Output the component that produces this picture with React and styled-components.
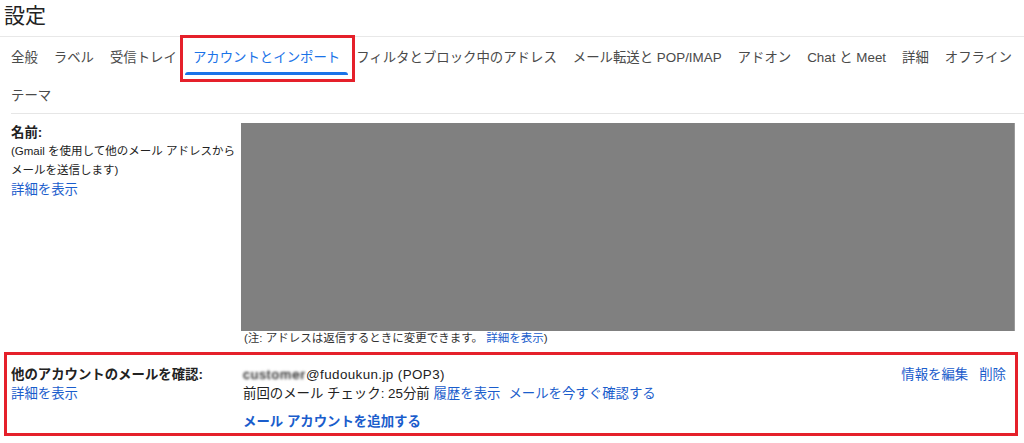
import React from 'react';
import styled, { createGlobalStyle } from 'styled-components';

const GlobalStyle = createGlobalStyle`
  body {
    margin: 0;
    background: #fff;
    font-family: "Liberation Sans", Arial, "Noto Sans CJK JP", sans-serif;
    color: #222;
  }
`;

const Page = styled.div`
  width: 1024px;
  height: 443px;
  overflow: hidden;
`;

const Title = styled.h1`
  margin: 0;
  height: 37px;
  box-sizing: border-box;
  padding: 4px 0 0 4px;
  font-size: 21px;
  line-height: 23px;
  font-weight: normal;
  color: #222;
  border-bottom: 1px solid #e8e8e8;
`;

const TabBar = styled.nav`
  display: flex;
  flex-wrap: wrap;
  padding-left: 3px;
`;

const Tab = styled.div`
  position: relative;
  height: 38px;
  padding: 0 8px;
  display: flex;
  align-items: center;
  font-size: 13.4px;
  white-space: nowrap;
  color: ${(p) => (p.$active ? '#1a73e8' : '#4a4a4a')};
  cursor: pointer;
  &::after {
    content: '';
    display: ${(p) => (p.$active ? 'block' : 'none')};
    position: absolute;
    left: 0;
    right: 0;
    bottom: 0;
    height: 3px;
    border-radius: 3px 3px 0 0;
    background: #1a73e8;
  }
`;

const Highlight = styled.div`
  position: absolute;
  border: 3px solid #e5202a;
  pointer-events: none;
  z-index: 2;
`;

const TabHighlight = styled(Highlight)`
  left: -5px;
  right: -7px;
  top: -2px;
  bottom: -7px;
`;

const Content = styled.div`
  margin-left: 11px;
  border-top: 1px solid #e6e6e6;
`;

const SettingRow = styled.div`
  position: relative;
  display: grid;
  grid-template-columns: 230px 1fr;
  padding: ${(p) => p.$pad};
  padding-right: 9px;
  font-size: 13.4px;
  line-height: 19px;
`;

const LabelCol = styled.div`
  display: flex;
  flex-direction: column;
  align-items: flex-start;
`;

const Label = styled.div`
  font-weight: bold;
  color: #222;
  white-space: nowrap;
`;

const Hint = styled.div`
  font-size: 11.5px;
  color: #222;
  white-space: nowrap;
`;

const Link = styled.a`
  color: #1a5dcc;
  text-decoration: none;
  cursor: pointer;
  font-weight: ${(p) => (p.$bold ? 'bold' : 'normal')};
  margin-left: ${(p) => p.$gap || 0}px;
`;

const Redacted = styled.div`
  height: 208px;
  background: #808080;
  border-right: 1px solid #9a9a9a;
`;

const Note = styled.div`
  font-size: 11.5px;
  line-height: 14px;
  padding-left: 3px;
  color: #333;
`;

const ValueCol = styled.div`
  display: flex;
  flex-direction: column;
`;

const AccountLine = styled.div`
  display: flex;
  justify-content: space-between;
  padding-left: 2px;
`;

const Address = styled.span`
  letter-spacing: 0.4px;
`;

const Blurred = styled.span`
  display: inline-block;
  color: #3a3a3a;
  letter-spacing: 1px;
  text-shadow: 0 0 2px #444;
  filter: blur(1px);
`;

const Actions = styled.div`
  display: flex;
  gap: 11px;
  margin-right: 9px;
`;

const TextLine = styled.div`
  padding-left: 2px;
  margin-top: ${(p) => p.$top || 0}px;
`;

const AccountHighlight = styled(Highlight)`
  left: -7px;
  right: 6px;
  top: 0;
  bottom: 0;
`;

const tabs = [
  '全般',
  'ラベル',
  '受信トレイ',
  'アカウントとインポート',
  'フィルタとブロック中のアドレス',
  'メール転送と POP/IMAP',
  'アドオン',
  'Chat と Meet',
  '詳細',
  'オフライン',
  'テーマ',
];

export default function App() {
  const active = 'アカウントとインポート';
  return (
    <Page>
      <GlobalStyle />
      <Title>設定</Title>
      <TabBar>
        {tabs.map((t) => (
          <Tab key={t} $active={t === active}>
            {t}
            {t === active && <TabHighlight />}
          </Tab>
        ))}
      </TabBar>
      <Content>
        <SettingRow $pad="9px 0 7px">
          <LabelCol>
            <Label>名前:</Label>
            <Hint>(Gmail を使用して他のメール アドレスから</Hint>
            <Hint>メールを送信します)</Hint>
            <Link>詳細を表示</Link>
          </LabelCol>
          <ValueCol>
            <Redacted />
            <Note>
              (注: アドレスは返信するときに変更できます。 <Link>詳細を表示</Link>)
            </Note>
          </ValueCol>
        </SettingRow>
        <SettingRow $pad="13px 0 5px">
          <AccountHighlight />
          <LabelCol>
            <Label>他のアカウントのメールを確認:</Label>
            <Link>詳細を表示</Link>
          </LabelCol>
          <ValueCol>
            <AccountLine>
              <Address>
                <Blurred>customer</Blurred>@fudoukun.jp (POP3)
              </Address>
              <Actions>
                <Link>情報を編集</Link>
                <Link>削除</Link>
              </Actions>
            </AccountLine>
            <TextLine>
              前回のメール チェック: 25分前 <Link>履歴を表示</Link>
              <Link $gap={8}>メールを今すぐ確認する</Link>
            </TextLine>
            <TextLine $top={9}>
              <Link $bold>メール アカウントを追加する</Link>
            </TextLine>
          </ValueCol>
        </SettingRow>
      </Content>
    </Page>
  );
}
